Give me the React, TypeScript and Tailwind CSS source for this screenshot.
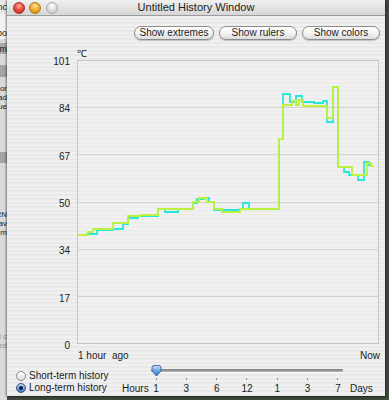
import React from "react";

type Pt = [number, number];

function steps(arr: Pt[]): string {
  const out: string[] = [];
  for (let i = 0; i < arr.length; i++) {
    const [x, y] = arr[i];
    if (i > 0) {
      const prevY = arr[i - 1][1];
      out.push(`${x},${prevY}`);
    }
    out.push(`${x},${y}`);
  }
  return out.join(" ");
}

const green: Pt[] = [
  [78, 235], [88, 232], [93, 229], [113, 223], [128, 216], [140, 215], [158, 209],
  [193, 202], [199, 198], [207, 202], [214, 209], [222, 212], [240, 209], [279, 209],
  [279, 139], [283, 139], [283, 105], [292, 101], [296, 105], [299, 100], [303, 106],
  [327, 118], [333, 87], [338, 167], [352, 175], [367, 163], [371, 166], [374, 166],
];

const cyan: Pt[] = [
  [78, 235], [87, 234], [97, 230], [113, 229], [123, 224], [128, 218], [138, 216],
  [158, 209], [165, 212], [178, 209], [193, 203], [197, 199], [204, 198], [209, 202],
  [214, 210], [240, 209], [243, 203], [249, 209], [279, 209], [279, 139], [283, 139],
  [283, 94], [290, 102], [296, 96], [302, 102], [314, 103], [323, 101], [327, 122],
  [333, 87], [338, 167], [344, 172], [349, 175], [358, 180], [364, 162], [369, 165],
  [372, 165],
];

function Frag({ t, cls = "" }: { t: string; cls?: string }) {
  return (
    <div className={`h-[9px] flex justify-end items-center whitespace-nowrap text-[8px] leading-[9px] ${cls}`}>{t}</div>
  );
}

function BackWindow() {
  return (
    <div className="w-[7px] h-full shrink-0 overflow-hidden flex flex-col bg-[#dadada] text-[#222]">
      <div className="h-[14px] bg-[#e8e8e8] flex justify-end items-center whitespace-nowrap text-[9px] leading-[10px]">Func</div>
      <div className="h-[13px] bg-[#f2f2f2]" />
      <div className="h-[12px] bg-[#f2f2f2] flex justify-end items-center whitespace-nowrap text-[9px] leading-[10px]">Jobo</div>
      <div className="h-[4px]" />
      <div className="h-[11px] bg-[#a9a9a9] flex justify-end items-center whitespace-nowrap text-[9px] leading-[10px]">Im</div>
      <div className="h-[11px]" />
      <div className="h-[12px] bg-[#a3a3a3]" />
      <div className="h-[7px]" />
      <Frag t="Mor" />
      <Frag t="Load" />
      <Frag t="Que" />
      <div className="h-[41px]" />
      <div className="h-[11px] bg-[#a3a3a3]" />
      <div className="h-[47px]" />
      <Frag t="ERN" />
      <Frag t="Sav" />
      <Frag t="Im" />
      <div className="h-[95px]" />
      <Frag t="all c" cls="text-[#8a8a8a]" />
      <Frag t="Red" cls="text-[#8a8a8a]" />
      <div className="flex-1" />
    </div>
  );
}

function TitleBar() {
  return (
    <div className="h-[16px] shrink-0 grid grid-cols-[1fr_auto_1fr] items-center border-b border-[#9c9c9c] bg-linear-to-b from-[#f0f0f0] to-[#d6d6d6]">
      <div className="flex items-center pl-[6px]">
        <span className="w-[12px] h-[12px] rounded-full border border-[#a03028] bg-[radial-gradient(circle_at_50%_30%,#ffb0a0_0%,#e8503c_45%,#b82818_100%)]" />
        <span className="ml-[4px] w-[12px] h-[12px] rounded-full border border-[#b07818] bg-[radial-gradient(circle_at_50%_30%,#ffe8a0_0%,#f4b030_45%,#c88010_100%)]" />
        <span className="ml-[5px] w-[12px] h-[12px] rounded-full border border-[#a8a8a8] bg-[radial-gradient(circle_at_50%_30%,#ffffff_0%,#dedede_50%,#bcbcbc_100%)]" />
      </div>
      <div className="text-[11px] leading-[15px] text-[#222]">Untitled History Window</div>
      <div />
    </div>
  );
}

function AquaButton({ label, w }: { label: string; w: string }) {
  return (
    <div
      className={`${w} h-[14px] rounded-full border border-[#8c8c8c] bg-linear-to-b from-white via-[#f4f4f4] to-[#dcdcdc] shadow-[0_1px_1px_rgba(0,0,0,0.2)] flex items-center justify-center text-[10px] leading-[12px] text-[#1a1a1a]`}
    >
      {label}
    </div>
  );
}

const yLabels = ["101", "84", "67", "50", "34", "17", "0"];
const ticks = ["1", "3", "6", "12", "1", "3", "7"];

function Chart() {
  return (
    <div className="flex flex-col">
      <div className="mt-[8px] h-[12px] pl-[70px] text-[10px] leading-[12px]">℃</div>
      <div className="flex">
        <div className="w-[63px] h-[294px] -mt-[3px] flex flex-col justify-between items-end text-[10px] leading-[10px] text-[#222]">
          {yLabels.map((l) => (
            <span key={l}>{l}</span>
          ))}
        </div>
        <div className="ml-[7px] relative w-[302px] h-[284px] border border-[#c6c6c6] bg-[#f2f2f2]/40 flex flex-col">
          {[0, 1, 2, 3, 4, 5].map((i) => (
            <div key={i} className={i < 5 ? "flex-1 border-b border-[#d2d2d2]" : "flex-1"} />
          ))}
          <svg
            className="absolute -inset-px w-[302px] h-[284px]"
            viewBox="77 60 302 284"
            fill="none"
          >
            <polyline points={steps(cyan)} stroke="#28e6dc" strokeWidth={1.8} strokeLinejoin="miter" />
            <polyline points={steps(green)} stroke="#bcf23e" strokeWidth={1.8} strokeLinejoin="miter" />
          </svg>
        </div>
      </div>
      <div className="mt-0 h-[10px] pl-[71px] w-[373px] flex justify-between text-[10px] leading-[10px] text-[#222]">
        <span className="whitespace-pre">1 hour  ago</span>
        <span>Now</span>
      </div>
    </div>
  );
}

function Radio({ checked, label }: { checked: boolean; label: string }) {
  return (
    <div className="h-[10px] flex items-center">
      {checked ? (
        <span className="w-[10px] h-[10px] rounded-full border border-[#2f4f86] bg-linear-to-b from-[#b8d4f4] to-[#3a7ad0] flex items-center justify-center">
          <span className="w-[4px] h-[4px] rounded-full bg-[#0e1c34]" />
        </span>
      ) : (
        <span className="w-[10px] h-[10px] rounded-full border border-[#8a8a8a] bg-linear-to-b from-white to-[#dedede]" />
      )}
      <span className="ml-[3px] text-[10px] leading-[10px] text-[#1a1a1a]">{label}</span>
    </div>
  );
}

function Controls() {
  return (
    <div className="mt-[4px] flex">
      <div className="pl-[9px] w-[113px] pt-[6px] flex flex-col gap-[2px]">
        <Radio checked={false} label="Short-term history" />
        <Radio checked={true} label="Long-term history" />
      </div>
      <div className="flex flex-col">
        <div className="relative h-[12px]">
          <div className="ml-[31px] mt-[4px] w-[192px] h-[3px] rounded-full bg-linear-to-b from-[#7a7a7a] to-[#b8b8b8] shadow-[0_1px_0_rgba(255,255,255,0.8)]" />
          <svg className="absolute left-[31px] top-0 w-[11px] h-[12px]" viewBox="0 0 11 12">
            <defs>
              <linearGradient id="thumb" x1="0" y1="0" x2="0" y2="1">
                <stop offset="0" stopColor="#cfe2f8" />
                <stop offset="0.5" stopColor="#6aa4e6" />
                <stop offset="1" stopColor="#2f6cc4" />
              </linearGradient>
            </defs>
            <path
              d="M1,2.5 Q1,0.5 3,0.5 H8 Q10,0.5 10,2.5 V6 L5.5,11 L1,6 Z"
              fill="url(#thumb)"
              stroke="#2a4f88"
              strokeWidth={0.8}
            />
          </svg>
        </div>
        <div className="flex items-end text-[10px] leading-[10px] text-[#1a1a1a]">
          <span className="w-[31px] pl-[2px]">Hours</span>
          <div className="flex gap-[20.33px]">
            {ticks.map((t, i) => (
              <div key={i} className="w-[10px] flex flex-col items-center">
                <span className="mt-[1px] w-px h-[2px] bg-[#8a8a8a]" />
                <span className="mt-[4px] whitespace-nowrap">{t}</span>
              </div>
            ))}
          </div>
          <span className="ml-[7px]">Days</span>
        </div>
      </div>
    </div>
  );
}

export default function App() {
  return (
    <div className="w-[389px] h-[400px] overflow-hidden flex bg-[#3e4a3c] [font-family:'Liberation_Sans',Arial,sans-serif] text-[#1a1a1a]">
      <BackWindow />
      <div className="w-[378px] h-[396px] shrink-0 flex flex-col shadow-[-1px_0_2px_rgba(0,0,0,0.45),1px_1px_2px_rgba(0,0,0,0.4)] bg-[repeating-linear-gradient(180deg,#f0f0f0_0px,#f0f0f0_2px,#e9e9e9_2px,#e9e9e9_4px)]">
        <TitleBar />
        <div className="mt-[10px] pr-[5px] flex justify-end gap-[5px]">
          <AquaButton label="Show extremes" w="w-[80px]" />
          <AquaButton label="Show rulers" w="w-[78px]" />
          <AquaButton label="Show colors" w="w-[78px]" />
        </div>
        <Chart />
        <Controls />
      </div>
    </div>
  );
}
